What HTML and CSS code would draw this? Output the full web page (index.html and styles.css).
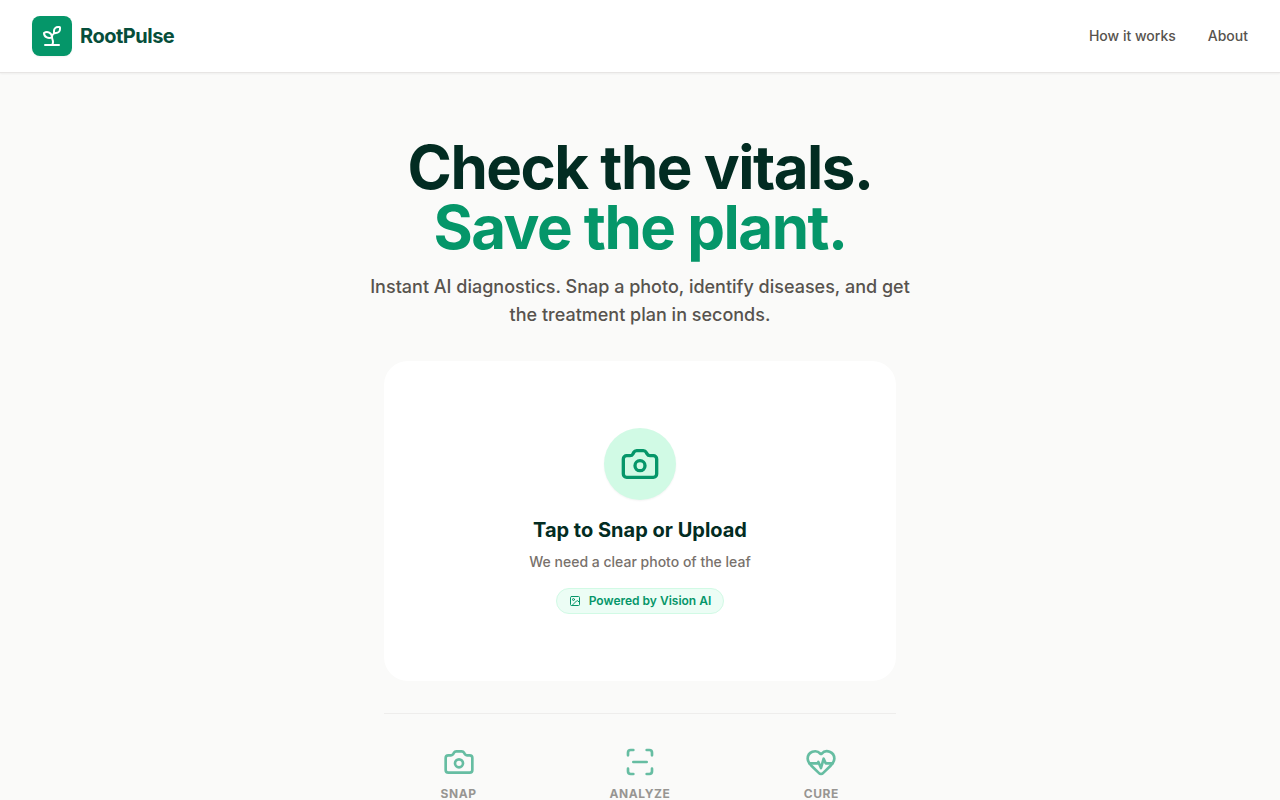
FILE: index.html
```html
<!DOCTYPE html>
<html lang="en">
<head>
<meta charset="utf-8">
<meta name="viewport" content="width=device-width, initial-scale=1">
<title>RootPulse</title>
<link rel="stylesheet" href="styles.css">
</head>
<body>
<header class="site-header">
  <a class="brand" href="#">
    <span class="brand-mark">
      <svg class="icon icon-md" viewBox="0 0 24 24" aria-hidden="true"><path d="M14 9.536V7a4 4 0 0 1 4-4h1.5a.5.5 0 0 1 .5.5V5a4 4 0 0 1-4 4 4 4 0 0 0-4 4c0 2 1 3 1 5a5 5 0 0 1-1 3"/><path d="M4 9a5 5 0 0 1 8 4 5 5 0 0 1-8-4"/><path d="M5 21h14"/></svg>
    </span>
    <span class="brand-name">RootPulse</span>
  </a>
  <nav class="site-nav">
    <a href="#how">How it works</a>
    <a href="#about">About</a>
  </nav>
</header>
<main class="hero">
  <h1 class="title">Check the vitals.<br><span class="title-accent">Save the plant.</span></h1>
  <p class="lead">Instant AI diagnostics. Snap a photo, identify diseases, and get the treatment plan in seconds.</p>
  <button class="upload" type="button">
    <span class="upload-icon">
      <svg class="icon icon-xl" viewBox="0 0 24 24" aria-hidden="true"><path d="M13.997 4a2 2 0 0 1 1.76 1.05l.486.9A2 2 0 0 0 18.003 7H20a2 2 0 0 1 2 2v9a2 2 0 0 1-2 2H4a2 2 0 0 1-2-2V9a2 2 0 0 1 2-2h1.997a2 2 0 0 0 1.759-1.048l.489-.904A2 2 0 0 1 10.004 4z"/><circle cx="12" cy="13" r="3"/></svg>
    </span>
    <span class="upload-title">Tap to Snap or Upload</span>
    <span class="upload-hint">We need a clear photo of the leaf</span>
    <span class="badge">
      <svg class="icon icon-xs" viewBox="0 0 24 24" aria-hidden="true"><rect x="3" y="3" width="18" height="18" rx="2"/><circle cx="9" cy="9" r="2"/><path d="m21 15-3.086-3.086a2 2 0 0 0-2.828 0L6 21"/></svg>
      <span>Powered by Vision AI</span>
    </span>
  </button>
  <div class="steps-wrap">
    <ul class="steps">
      <li class="step">
        <svg class="icon icon-lg" viewBox="0 0 24 24" aria-hidden="true"><path d="M13.997 4a2 2 0 0 1 1.76 1.05l.486.9A2 2 0 0 0 18.003 7H20a2 2 0 0 1 2 2v9a2 2 0 0 1-2 2H4a2 2 0 0 1-2-2V9a2 2 0 0 1 2-2h1.997a2 2 0 0 0 1.759-1.048l.489-.904A2 2 0 0 1 10.004 4z"/><circle cx="12" cy="13" r="3"/></svg>
        <span>SNAP</span>
      </li>
      <li class="step">
        <svg class="icon icon-lg" viewBox="0 0 24 24" aria-hidden="true"><path d="M3 7V5a2 2 0 0 1 2-2h2"/><path d="M17 3h2a2 2 0 0 1 2 2v2"/><path d="M21 17v2a2 2 0 0 1-2 2h-2"/><path d="M7 21H5a2 2 0 0 1-2-2v-2"/><path d="M7 12h10"/></svg>
        <span>ANALYZE</span>
      </li>
      <li class="step">
        <svg class="icon icon-lg" viewBox="0 0 24 24" aria-hidden="true"><path d="M2 9.5a5.5 5.5 0 0 1 9.591-3.676.56.56 0 0 0 .818 0A5.49 5.49 0 0 1 22 9.5c0 2.29-1.5 4-3 5.5l-5.492 5.313a2 2 0 0 1-3 .019L5 15c-1.5-1.5-3-3.2-3-5.5"/><path d="M3.22 13H9.5l.5-1 2 4.5 2-7 1.5 3.5h5.27"/></svg>
        <span>CURE</span>
      </li>
    </ul>
  </div>
</main>
</body>
</html>
```
FILE: styles.css
```css
* {
  box-sizing: border-box;
}

body {
  margin: 0;
  background: #fafaf9;
  color: #57534e;
  font-family: Inter, "Liberation Sans", sans-serif;
}

a {
  color: inherit;
  text-decoration: none;
}

.icon {
  display: block;
  flex: none;
  fill: none;
  stroke: currentColor;
  stroke-width: 2;
  stroke-linecap: round;
  stroke-linejoin: round;
}

.icon-xs { width: 12px; height: 12px; }
.icon-md { width: 24px; height: 24px; }
.icon-lg { width: 32px; height: 32px; }
.icon-xl { width: 40px; height: 40px; }

.site-header {
  display: flex;
  align-items: center;
  justify-content: space-between;
  padding: 16px 32px;
  background: #ffffff;
  border-bottom: 1px solid #e7e5e4;
  box-shadow: 0 1px 2px rgba(0, 0, 0, 0.05);
}

.brand {
  display: flex;
  align-items: center;
  gap: 8px;
}

.brand-mark {
  display: grid;
  place-items: center;
  width: 40px;
  height: 40px;
  border-radius: 8px;
  background: #059669;
  color: #ffffff;
  box-shadow: 0 1px 2px rgba(0, 0, 0, 0.05);
}

.brand-name {
  color: #064e3b;
  font-size: 20px;
  line-height: 28px;
  font-weight: 700;
  letter-spacing: -0.025em;
}

.site-nav {
  display: flex;
  gap: 32px;
  font-size: 14px;
  line-height: 20px;
  font-weight: 500;
}

.hero {
  display: flex;
  flex-direction: column;
  align-items: center;
  padding: 64px 16px;
}

.title {
  margin: 0;
  color: #022c22;
  font-size: 60px;
  line-height: 60px;
  font-weight: 700;
  letter-spacing: -0.025em;
  text-align: center;
}

.title-accent {
  color: #059669;
}

.lead {
  max-width: 560px;
  margin: 16px 0 32px;
  font-size: 18px;
  line-height: 28px;
  font-weight: 500;
  text-align: center;
}

.upload {
  display: flex;
  flex-direction: column;
  align-items: center;
  justify-content: center;
  width: 100%;
  max-width: 512px;
  min-height: 320px;
  padding: 32px;
  border: 0;
  border-radius: 24px;
  background: #ffffff;
  font: inherit;
  cursor: pointer;
}

.upload-icon {
  display: grid;
  place-items: center;
  width: 72px;
  height: 72px;
  margin-bottom: 16px;
  border-radius: 50%;
  background: #d1fae5;
  color: #059669;
  box-shadow: 0 1px 2px rgba(0, 0, 0, 0.05);
}

.upload-title {
  margin-bottom: 8px;
  color: #022c22;
  font-size: 20px;
  line-height: 28px;
  font-weight: 700;
}

.upload-hint {
  margin-bottom: 16px;
  color: #78716c;
  font-size: 14px;
  line-height: 20px;
  font-weight: 500;
}

.badge {
  display: flex;
  align-items: center;
  gap: 8px;
  padding: 4px 12px;
  border: 1px solid #d1fae5;
  border-radius: 13px;
  background: #ecfdf5;
  color: #059669;
  font-size: 12px;
  line-height: 16px;
  font-weight: 600;
}

.steps-wrap {
  width: 100%;
  max-width: 512px;
  margin-top: 32px;
  padding-top: 32px;
  border-top: 1px solid #e7e5e4;
  opacity: 0.6;
}

.steps {
  display: grid;
  grid-template-columns: repeat(3, 1fr);
  gap: 32px;
  margin: 0;
  padding: 0;
  list-style: none;
}

.step {
  display: flex;
  flex-direction: column;
  align-items: center;
  gap: 8px;
  font-size: 12px;
  line-height: 16px;
  font-weight: 700;
  letter-spacing: 0.05em;
}

.step .icon {
  color: #059669;
}
```
